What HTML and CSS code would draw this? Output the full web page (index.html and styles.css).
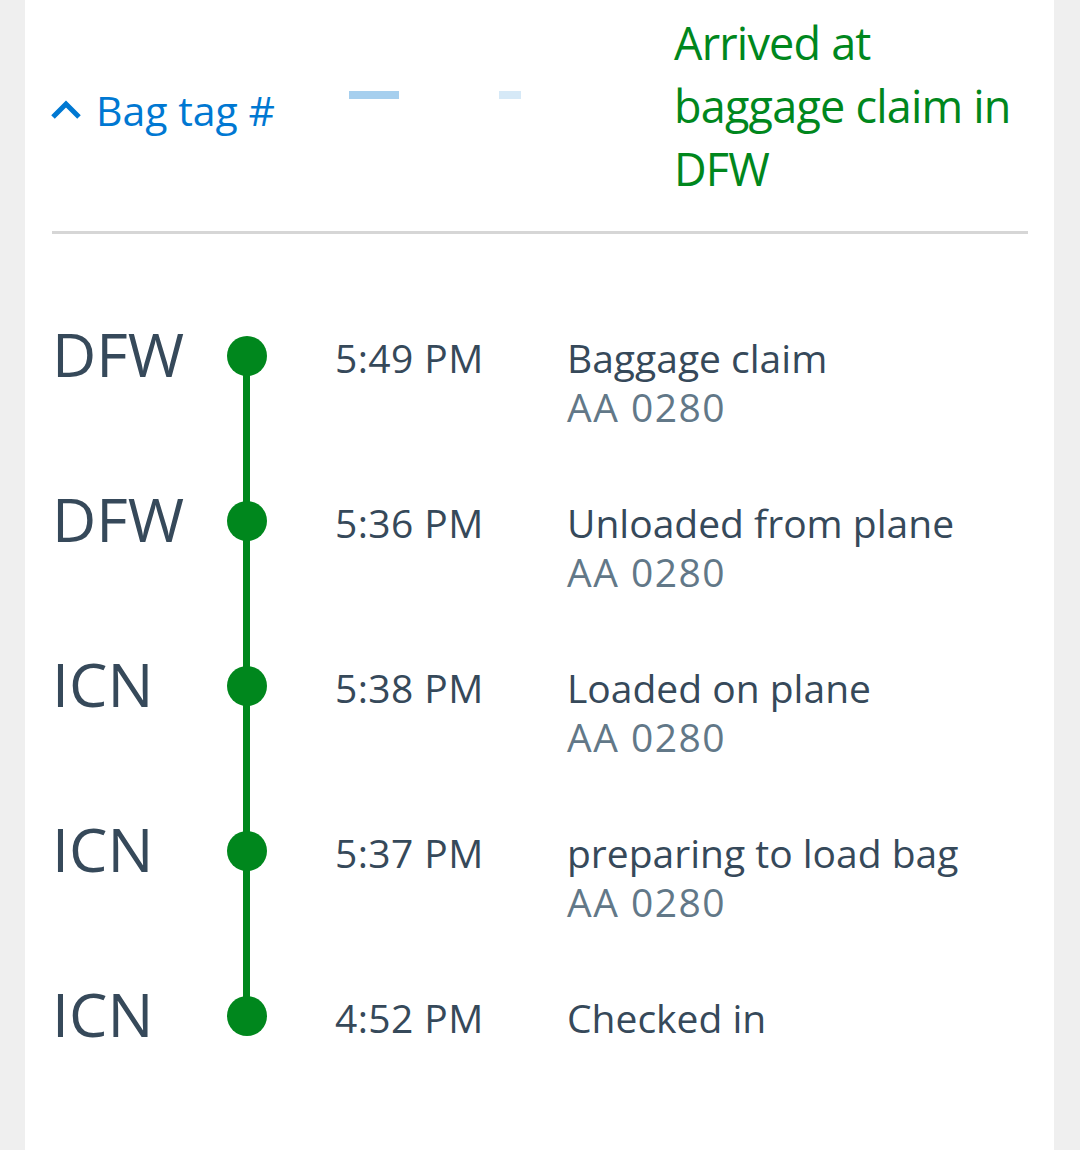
FILE: index.html
```html
<!DOCTYPE html>
<html lang="en">
<head>
  <meta charset="UTF-8">
  <meta name="viewport" content="width=device-width, initial-scale=1.0">
  <title>Bag tracking</title>
  <link rel="stylesheet" href="styles.css">
</head>
<body>

<div class="card">
  <div class="bag-header">
    <div class="bag-toggle">
      <svg class="chevron" width="32" height="20" viewBox="0 0 32 20">
        <path d="M3 17 L16 4 L29 17" fill="none" stroke="#0078d2" stroke-width="5"/>
      </svg>
      <span class="bag-label">Bag tag #</span>
      <span class="tag-bar tag-bar-long"></span>
      <span class="tag-bar tag-bar-short"></span>
    </div>
    <div class="bag-status">Arrived at baggage claim in DFW</div>
  </div>

  <div class="divider"></div>

  <div class="timeline">
    <div class="event">
      <div class="station">DFW</div>
      <div class="marker"></div>
      <div class="time">5:49 PM</div>
      <div class="detail">
        <div class="detail-title">Baggage claim</div>
        <div class="detail-flight">AA 0280</div>
      </div>
    </div>
    <div class="event">
      <div class="station">DFW</div>
      <div class="marker"></div>
      <div class="time">5:36 PM</div>
      <div class="detail">
        <div class="detail-title">Unloaded from plane</div>
        <div class="detail-flight">AA 0280</div>
      </div>
    </div>
    <div class="event">
      <div class="station">ICN</div>
      <div class="marker"></div>
      <div class="time">5:38 PM</div>
      <div class="detail">
        <div class="detail-title">Loaded on plane</div>
        <div class="detail-flight">AA 0280</div>
      </div>
    </div>
    <div class="event">
      <div class="station">ICN</div>
      <div class="marker"></div>
      <div class="time">5:37 PM</div>
      <div class="detail">
        <div class="detail-title">preparing to load bag</div>
        <div class="detail-flight">AA 0280</div>
      </div>
    </div>
    <div class="event last">
      <div class="station">ICN</div>
      <div class="marker"></div>
      <div class="time">4:52 PM</div>
      <div class="detail">
        <div class="detail-title">Checked in</div>
      </div>
    </div>
  </div>
</div>

</body>
</html>
```

FILE: styles.css
```css
body {
  background-color: #efefef;
  margin: 0;
  font-family: "Open Sans", "Noto Sans", sans-serif;
  color: #36495a;
}

.card {
  background-color: #fff;
  margin-left: 25px;
  width: 1029px;
  min-height: 1150px;
  box-sizing: border-box;
  padding: 11px 26px 0 27px;
}

.bag-header {
  display: flex;
  align-items: center;
  padding-bottom: 31px;
}

.bag-toggle {
  width: 622px;
  flex-shrink: 0;
  display: flex;
  align-items: center;
  padding-top: 8px;
}

.chevron {
  margin-left: -2px;
  margin-right: 14px;
}

.bag-label {
  font-size: 41px;
  line-height: 50px;
  color: #0078d2;
}

.tag-bar {
  height: 8px;
  margin-bottom: 30px;
}

.tag-bar-long {
  width: 50px;
  margin-left: 74px;
  background-color: #a6cfee;
}

.tag-bar-short {
  width: 22px;
  margin-left: 100px;
  background-color: #d6e9f7;
}

.bag-status {
  width: 345px;
  flex-shrink: 0;
  font-size: 45px;
  line-height: 63px;
  letter-spacing: -0.8px;
  color: #00871d;
}

.divider {
  height: 3px;
  background-color: #d6d6d6;
}

.timeline {
  padding-top: 88px;
}

.event {
  display: grid;
  grid-template-columns: 175px 40px 68px 232px 1fr;
  align-items: start;
  height: 165px;
}

.station {
  font-size: 61px;
  line-height: 63px;
}

.marker {
  grid-column: 2;
  position: relative;
  width: 40px;
  height: 40px;
  margin-top: 14px;
  border-radius: 50%;
  background-color: #00871d;
}

.marker::after {
  content: "";
  position: absolute;
  left: 16px;
  top: 20px;
  width: 7px;
  height: 165px;
  background-color: #00871d;
}

.event.last .marker::after {
  display: none;
}

.time {
  grid-column: 4;
  font-size: 39px;
  line-height: 49px;
  padding-top: 11px;
  letter-spacing: 0.4px;
}

.detail {
  grid-column: 5;
  padding-top: 11px;
}

.detail-title {
  font-size: 39px;
  line-height: 49px;
}

.detail-flight {
  font-size: 39px;
  line-height: 49px;
  letter-spacing: 1.5px;
  color: #627888;
}
```
